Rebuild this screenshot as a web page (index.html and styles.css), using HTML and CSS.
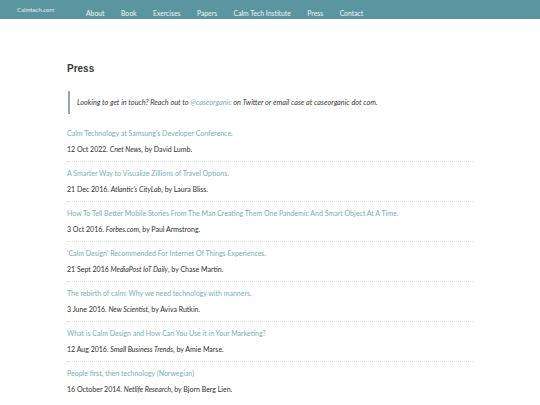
FILE: index.html
```html
<!DOCTYPE html>
<html lang="en">
<head>
    <meta charset="UTF-8">
    <meta name="viewport" content="width=device-width, initial-scale=1.0">
    <title>Press - Calmtech.com</title>
    <link rel="stylesheet" href="styles.css">
</head>
<body>
    <nav class="topbar">
        <a href="#" class="brand">Calmtech.com</a>
        <ul class="menu">
            <li><a href="#">About</a></li>
            <li><a href="#">Book</a></li>
            <li><a href="#">Exercises</a></li>
            <li><a href="#">Papers</a></li>
            <li><a href="#">Calm Tech Institute</a></li>
            <li><a href="#">Press</a></li>
            <li><a href="#">Contact</a></li>
        </ul>
    </nav>

    <div class="page">
        <h1 class="title">Press</h1>

        <blockquote class="note">
            Looking to get in touch? Reach out to <a href="#">@caseorganic</a> on Twitter or email case at caseorganic dot com.
        </blockquote>

        <ul class="press">
            <li>
                <a href="#">Calm Technology at Samsung's Developer Conference.</a>
                <p>12 Oct 2022. <em>Cnet News</em>, by David Lumb.</p>
            </li>
            <li>
                <a href="#">A Smarter Way to Visualize Zillions of Travel Options.</a>
                <p>21 Dec 2016. <em>Atlantic's CityLab</em>, by Laura Bliss.</p>
            </li>
            <li>
                <a href="#">How To Tell Better Mobile Stories From The Man Creating Them One Pandemic And Smart Object At A Time.</a>
                <p>3 Oct 2016. <em>Forbes.com</em>, by Paul Armstrong.</p>
            </li>
            <li>
                <a href="#">'Calm Design' Recommended For Internet Of Things Experiences.</a>
                <p>21 Sept 2016 <em>MediaPost IoT Daily</em>, by Chase Martin.</p>
            </li>
            <li>
                <a href="#">The rebirth of calm: Why we need technology with manners.</a>
                <p>3 June 2016. <em>New Scientist</em>, by Aviva Rutkin.</p>
            </li>
            <li>
                <a href="#">What is Calm Design and How Can You Use it in Your Marketing?</a>
                <p>12 Aug 2016. <em>Small Business Trends</em>, by Amie Marse.</p>
            </li>
            <li>
                <a href="#">People first, then technology (Norwegian)</a>
                <p>16 October 2014. <em>Netlife Research</em>, by Bjorn Berg Lien.</p>
            </li>
        </ul>
    </div>
</body>
</html>
```

FILE: styles.css
```css
body{
    margin: 0;
    background-color: #fff;
    color: #333;
    font-family: Lato, "Open Sans", sans-serif;
}
a{
    text-decoration: none;
}

/* top navigation */
.topbar{
    display: flex;
    align-items: center;
    height: 19px;
    padding-left: 17px;
    background-color: #5b95a0;
}
.brand{
    color: #e3eef0;
    font-size: 6px;
    width: 69px;
}
.menu{
    display: flex;
    gap: 16.5px;
    margin: 0;
    padding: 0;
    list-style: none;
}
.menu a{
    color: #eef5f6;
    font-size: 6.8px;
}

/* content */
.page{
    width: 406px;
    margin: 0 auto;
    padding-top: 44px;
}
.title{
    margin: 0;
    font-family: "Liberation Sans", Arial, sans-serif;
    font-size: 10px;
    font-weight: 700;
    color: #3a3a3a;
}
.note{
    margin: 17px 0 0 1px;
    padding: 6px 0 6px 7px;
    border-left: 2px solid #8fa9b0;
    font-style: italic;
    font-size: 7.3px;
    line-height: 11px;
    color: #3a3a3a;
}
.note a{
    color: #78aeb9;
}

.press{
    margin: 8px 0 0;
    padding: 0;
    list-style: none;
}
.press li{
    padding: 5px 0 6px;
    border-bottom: 1px dotted #ddd;
}
.press li:last-child{
    border-bottom: none;
}
.press a{
    display: block;
    color: #78aeb9;
    font-size: 7px;
    line-height: 12px;
}
.press p{
    margin: 4px 0 0;
    font-size: 7px;
    line-height: 12px;
    color: #2e2e2e;
}
```
